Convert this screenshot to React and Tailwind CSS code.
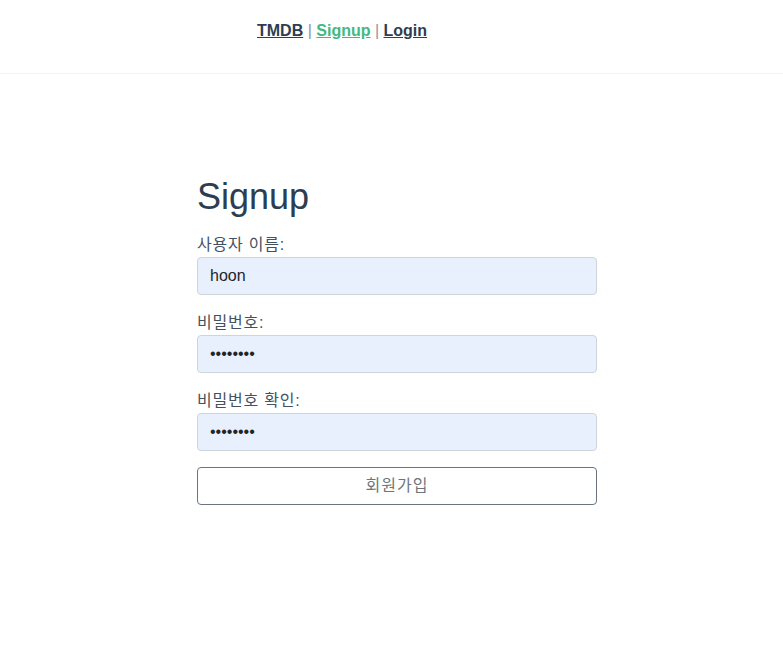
import React from 'react';

const Field = ({ label, type, value }) => (
  <div className="mb-4">
    <label className="block text-[16px] leading-6 tracking-[0.8px] text-[#44525f]">{label}</label>
    <input
      type={type}
      defaultValue={value}
      readOnly
      className="block w-full h-[38px] px-3 text-[16px] text-[#212529] bg-[#e8f0fe] border border-[#ced4da] rounded-[4px] outline-none"
    />
  </div>
);

export default function App() {
  return (
    <div className="min-h-screen bg-white font-['Liberation_Sans','Noto_Sans_CJK_KR',sans-serif] text-[#2c3e50]">
      {/* header */}
      <header className="h-[74px] border-b border-[#f2f2f2]">
        <nav className="pt-[19px] pl-[257px] text-[16px] leading-6 font-bold">
          <a href="#" className="underline text-[#2c3e50]">TMDB</a>
          <span className="font-normal text-[#8a96a3]"> | </span>
          <a href="#" className="underline text-[#42b983]">Signup</a>
          <span className="font-normal text-[#8a96a3]"> | </span>
          <a href="#" className="underline text-[#2c3e50]">Login</a>
        </nav>
      </header>

      {/* form */}
      <main className="w-[400px] ml-[197px] pt-[101px]">
        <h2 className="text-[36px] leading-[43px] font-normal mb-[15px]">Signup</h2>
        <form>
          <Field label="사용자 이름:" type="text" value="hoon" />
          <Field label="비밀번호:" type="password" value="12345678" />
          <Field label="비밀번호 확인:" type="password" value="12345678" />
          <button
            type="button"
            className="w-full h-[38px] text-[16px] tracking-[1px] text-[#6c757d] bg-white border border-[#6c757d] rounded-[4px]"
          >
            회원가입
          </button>
        </form>
      </main>
    </div>
  );
}
